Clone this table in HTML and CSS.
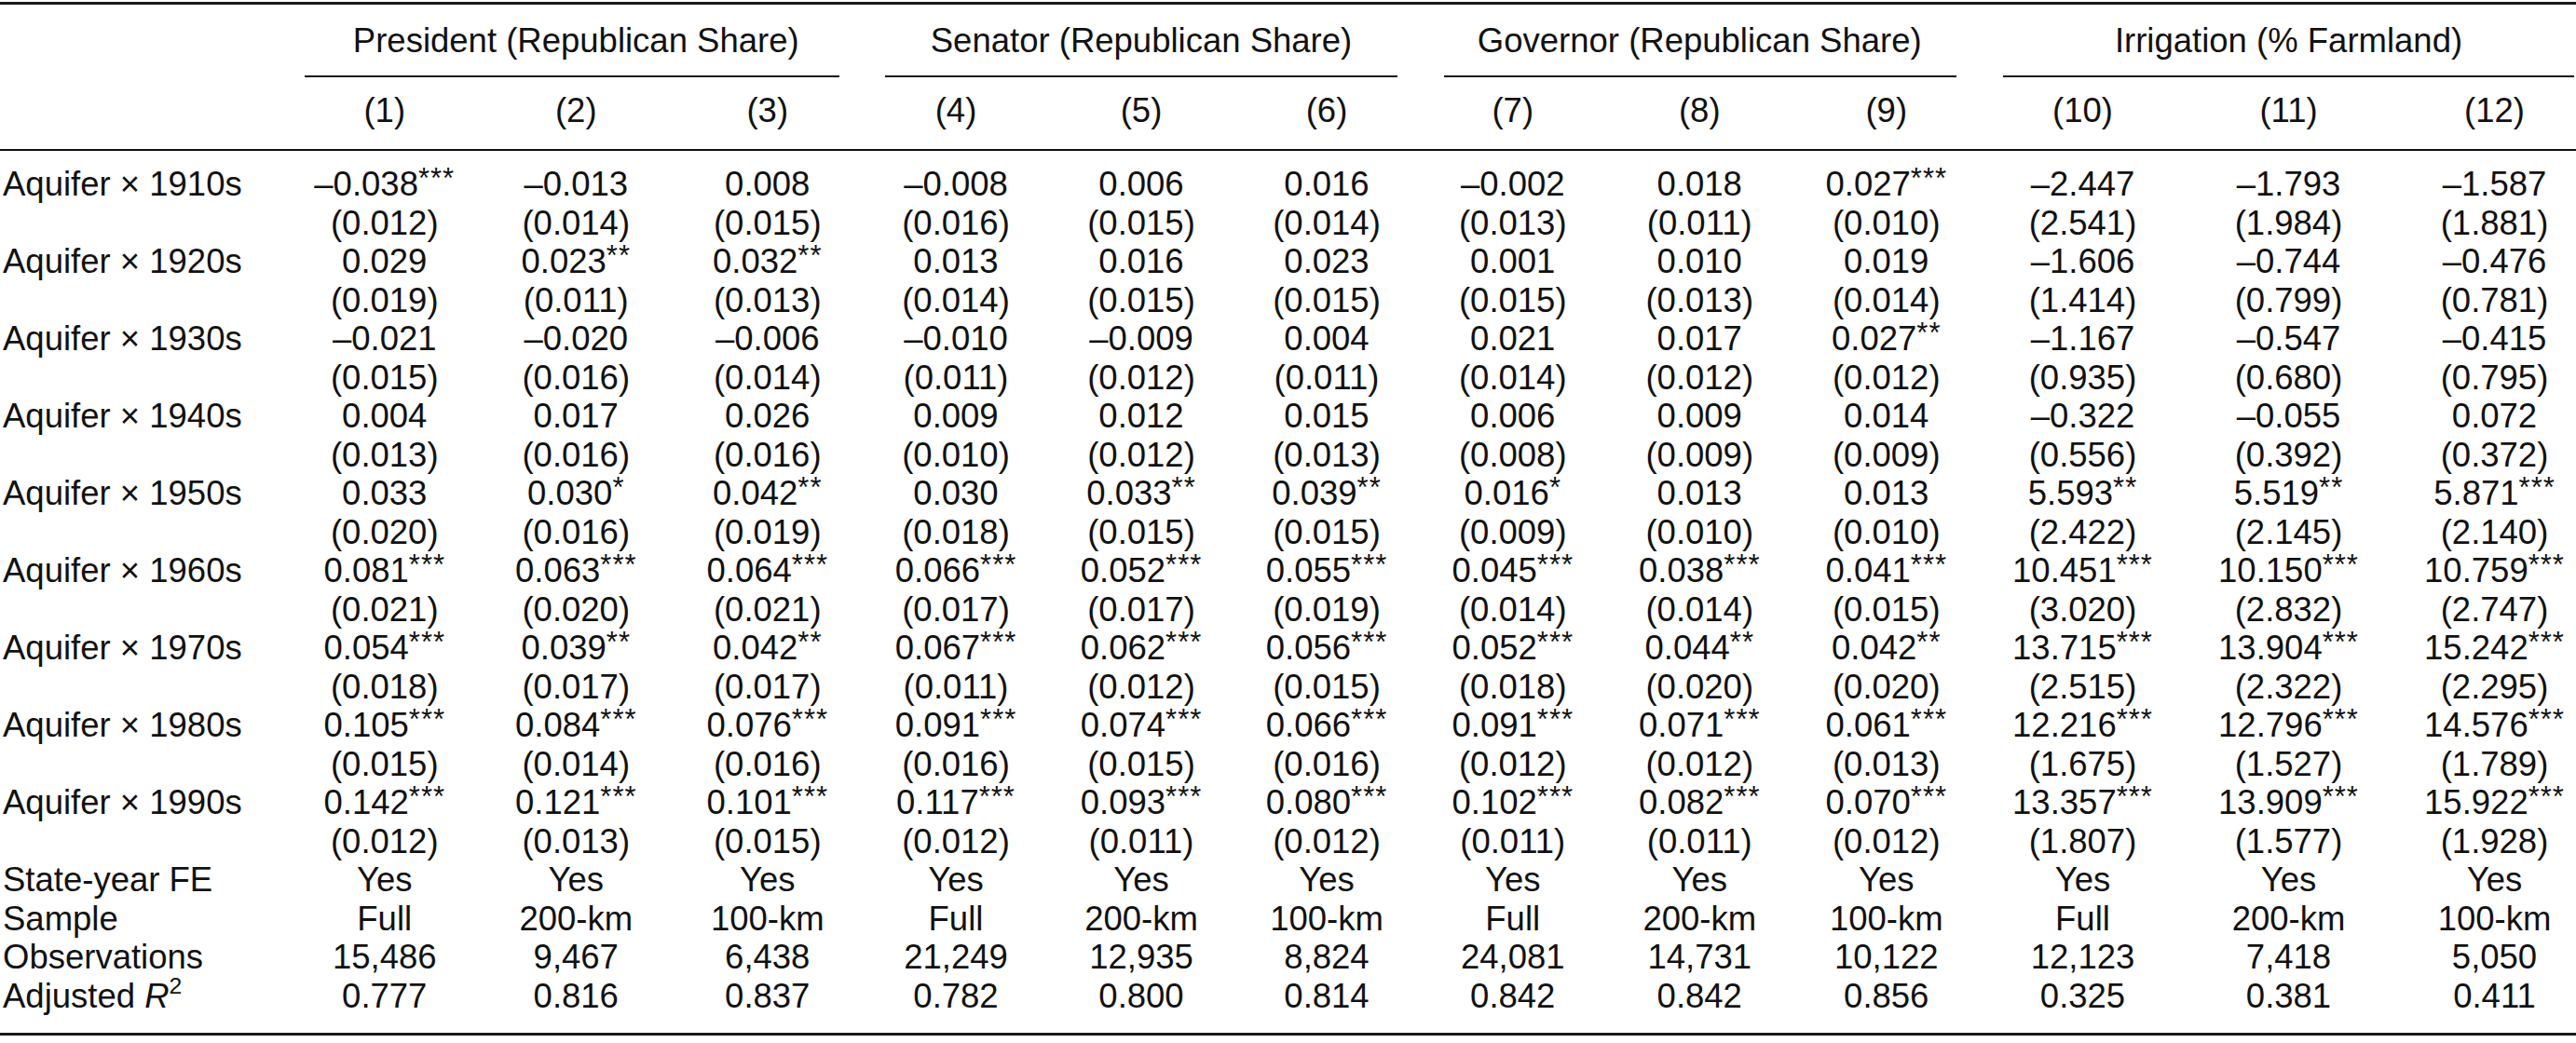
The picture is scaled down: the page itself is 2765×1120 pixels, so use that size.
FILE: index.html
```html
<!DOCTYPE html>
<html lang="en">
<head>
<meta charset="utf-8">
<title>Regression table</title>
<link rel="stylesheet" href="styles.css">
</head>
<body>
<div class="table">
  <div class="toprule"></div>

  <div class="l"></div>
  <div class="grp">President (Republican Share)</div>
  <div class="grp">Senator (Republican Share)</div>
  <div class="grp">Governor (Republican Share)</div>
  <div class="grp">Irrigation (% Farmland)</div>

  <div class="l cmidpad"></div>
  <div class="cmid g1"></div>
  <div class="cmid g2"></div>
  <div class="cmid g3"></div>
  <div class="cmid g4"></div>

  <div class="l"></div>
  <div class="c">(1)</div><div class="c">(2)</div><div class="c">(3)</div>
  <div class="c">(4)</div><div class="c">(5)</div><div class="c">(6)</div>
  <div class="c">(7)</div><div class="c">(8)</div><div class="c">(9)</div>
  <div class="c">(10)</div><div class="c">(11)</div><div class="c">(12)</div>

  <div class="midrule"></div>

  <div class="l">Aquifer × 1910s</div>
  <div class="c">–0.038<span class="s">***</span></div><div class="c">–0.013</div><div class="c">0.008</div>
  <div class="c">–0.008</div><div class="c">0.006</div><div class="c">0.016</div>
  <div class="c">–0.002</div><div class="c">0.018</div><div class="c">0.027<span class="s">***</span></div>
  <div class="c">–2.447</div><div class="c">–1.793</div><div class="c">–1.587</div>
  <div class="l"></div>
  <div class="c">(0.012)</div><div class="c">(0.014)</div><div class="c">(0.015)</div>
  <div class="c">(0.016)</div><div class="c">(0.015)</div><div class="c">(0.014)</div>
  <div class="c">(0.013)</div><div class="c">(0.011)</div><div class="c">(0.010)</div>
  <div class="c">(2.541)</div><div class="c">(1.984)</div><div class="c">(1.881)</div>

  <div class="l">Aquifer × 1920s</div>
  <div class="c">0.029</div><div class="c">0.023<span class="s">**</span></div><div class="c">0.032<span class="s">**</span></div>
  <div class="c">0.013</div><div class="c">0.016</div><div class="c">0.023</div>
  <div class="c">0.001</div><div class="c">0.010</div><div class="c">0.019</div>
  <div class="c">–1.606</div><div class="c">–0.744</div><div class="c">–0.476</div>
  <div class="l"></div>
  <div class="c">(0.019)</div><div class="c">(0.011)</div><div class="c">(0.013)</div>
  <div class="c">(0.014)</div><div class="c">(0.015)</div><div class="c">(0.015)</div>
  <div class="c">(0.015)</div><div class="c">(0.013)</div><div class="c">(0.014)</div>
  <div class="c">(1.414)</div><div class="c">(0.799)</div><div class="c">(0.781)</div>

  <div class="l">Aquifer × 1930s</div>
  <div class="c">–0.021</div><div class="c">–0.020</div><div class="c">–0.006</div>
  <div class="c">–0.010</div><div class="c">–0.009</div><div class="c">0.004</div>
  <div class="c">0.021</div><div class="c">0.017</div><div class="c">0.027<span class="s">**</span></div>
  <div class="c">–1.167</div><div class="c">–0.547</div><div class="c">–0.415</div>
  <div class="l"></div>
  <div class="c">(0.015)</div><div class="c">(0.016)</div><div class="c">(0.014)</div>
  <div class="c">(0.011)</div><div class="c">(0.012)</div><div class="c">(0.011)</div>
  <div class="c">(0.014)</div><div class="c">(0.012)</div><div class="c">(0.012)</div>
  <div class="c">(0.935)</div><div class="c">(0.680)</div><div class="c">(0.795)</div>

  <div class="l">Aquifer × 1940s</div>
  <div class="c">0.004</div><div class="c">0.017</div><div class="c">0.026</div>
  <div class="c">0.009</div><div class="c">0.012</div><div class="c">0.015</div>
  <div class="c">0.006</div><div class="c">0.009</div><div class="c">0.014</div>
  <div class="c">–0.322</div><div class="c">–0.055</div><div class="c">0.072</div>
  <div class="l"></div>
  <div class="c">(0.013)</div><div class="c">(0.016)</div><div class="c">(0.016)</div>
  <div class="c">(0.010)</div><div class="c">(0.012)</div><div class="c">(0.013)</div>
  <div class="c">(0.008)</div><div class="c">(0.009)</div><div class="c">(0.009)</div>
  <div class="c">(0.556)</div><div class="c">(0.392)</div><div class="c">(0.372)</div>

  <div class="l">Aquifer × 1950s</div>
  <div class="c">0.033</div><div class="c">0.030<span class="s">*</span></div><div class="c">0.042<span class="s">**</span></div>
  <div class="c">0.030</div><div class="c">0.033<span class="s">**</span></div><div class="c">0.039<span class="s">**</span></div>
  <div class="c">0.016<span class="s">*</span></div><div class="c">0.013</div><div class="c">0.013</div>
  <div class="c">5.593<span class="s">**</span></div><div class="c">5.519<span class="s">**</span></div><div class="c">5.871<span class="s">***</span></div>
  <div class="l"></div>
  <div class="c">(0.020)</div><div class="c">(0.016)</div><div class="c">(0.019)</div>
  <div class="c">(0.018)</div><div class="c">(0.015)</div><div class="c">(0.015)</div>
  <div class="c">(0.009)</div><div class="c">(0.010)</div><div class="c">(0.010)</div>
  <div class="c">(2.422)</div><div class="c">(2.145)</div><div class="c">(2.140)</div>

  <div class="l">Aquifer × 1960s</div>
  <div class="c">0.081<span class="s">***</span></div><div class="c">0.063<span class="s">***</span></div><div class="c">0.064<span class="s">***</span></div>
  <div class="c">0.066<span class="s">***</span></div><div class="c">0.052<span class="s">***</span></div><div class="c">0.055<span class="s">***</span></div>
  <div class="c">0.045<span class="s">***</span></div><div class="c">0.038<span class="s">***</span></div><div class="c">0.041<span class="s">***</span></div>
  <div class="c">10.451<span class="s">***</span></div><div class="c">10.150<span class="s">***</span></div><div class="c">10.759<span class="s">***</span></div>
  <div class="l"></div>
  <div class="c">(0.021)</div><div class="c">(0.020)</div><div class="c">(0.021)</div>
  <div class="c">(0.017)</div><div class="c">(0.017)</div><div class="c">(0.019)</div>
  <div class="c">(0.014)</div><div class="c">(0.014)</div><div class="c">(0.015)</div>
  <div class="c">(3.020)</div><div class="c">(2.832)</div><div class="c">(2.747)</div>

  <div class="l">Aquifer × 1970s</div>
  <div class="c">0.054<span class="s">***</span></div><div class="c">0.039<span class="s">**</span></div><div class="c">0.042<span class="s">**</span></div>
  <div class="c">0.067<span class="s">***</span></div><div class="c">0.062<span class="s">***</span></div><div class="c">0.056<span class="s">***</span></div>
  <div class="c">0.052<span class="s">***</span></div><div class="c">0.044<span class="s">**</span></div><div class="c">0.042<span class="s">**</span></div>
  <div class="c">13.715<span class="s">***</span></div><div class="c">13.904<span class="s">***</span></div><div class="c">15.242<span class="s">***</span></div>
  <div class="l"></div>
  <div class="c">(0.018)</div><div class="c">(0.017)</div><div class="c">(0.017)</div>
  <div class="c">(0.011)</div><div class="c">(0.012)</div><div class="c">(0.015)</div>
  <div class="c">(0.018)</div><div class="c">(0.020)</div><div class="c">(0.020)</div>
  <div class="c">(2.515)</div><div class="c">(2.322)</div><div class="c">(2.295)</div>

  <div class="l">Aquifer × 1980s</div>
  <div class="c">0.105<span class="s">***</span></div><div class="c">0.084<span class="s">***</span></div><div class="c">0.076<span class="s">***</span></div>
  <div class="c">0.091<span class="s">***</span></div><div class="c">0.074<span class="s">***</span></div><div class="c">0.066<span class="s">***</span></div>
  <div class="c">0.091<span class="s">***</span></div><div class="c">0.071<span class="s">***</span></div><div class="c">0.061<span class="s">***</span></div>
  <div class="c">12.216<span class="s">***</span></div><div class="c">12.796<span class="s">***</span></div><div class="c">14.576<span class="s">***</span></div>
  <div class="l"></div>
  <div class="c">(0.015)</div><div class="c">(0.014)</div><div class="c">(0.016)</div>
  <div class="c">(0.016)</div><div class="c">(0.015)</div><div class="c">(0.016)</div>
  <div class="c">(0.012)</div><div class="c">(0.012)</div><div class="c">(0.013)</div>
  <div class="c">(1.675)</div><div class="c">(1.527)</div><div class="c">(1.789)</div>

  <div class="l">Aquifer × 1990s</div>
  <div class="c">0.142<span class="s">***</span></div><div class="c">0.121<span class="s">***</span></div><div class="c">0.101<span class="s">***</span></div>
  <div class="c">0.117<span class="s">***</span></div><div class="c">0.093<span class="s">***</span></div><div class="c">0.080<span class="s">***</span></div>
  <div class="c">0.102<span class="s">***</span></div><div class="c">0.082<span class="s">***</span></div><div class="c">0.070<span class="s">***</span></div>
  <div class="c">13.357<span class="s">***</span></div><div class="c">13.909<span class="s">***</span></div><div class="c">15.922<span class="s">***</span></div>
  <div class="l"></div>
  <div class="c">(0.012)</div><div class="c">(0.013)</div><div class="c">(0.015)</div>
  <div class="c">(0.012)</div><div class="c">(0.011)</div><div class="c">(0.012)</div>
  <div class="c">(0.011)</div><div class="c">(0.011)</div><div class="c">(0.012)</div>
  <div class="c">(1.807)</div><div class="c">(1.577)</div><div class="c">(1.928)</div>

  <div class="l">State-year FE</div>
  <div class="c">Yes</div><div class="c">Yes</div><div class="c">Yes</div>
  <div class="c">Yes</div><div class="c">Yes</div><div class="c">Yes</div>
  <div class="c">Yes</div><div class="c">Yes</div><div class="c">Yes</div>
  <div class="c">Yes</div><div class="c">Yes</div><div class="c">Yes</div>

  <div class="l">Sample</div>
  <div class="c">Full</div><div class="c">200-km</div><div class="c">100-km</div>
  <div class="c">Full</div><div class="c">200-km</div><div class="c">100-km</div>
  <div class="c">Full</div><div class="c">200-km</div><div class="c">100-km</div>
  <div class="c">Full</div><div class="c">200-km</div><div class="c">100-km</div>

  <div class="l">Observations</div>
  <div class="c">15,486</div><div class="c">9,467</div><div class="c">6,438</div>
  <div class="c">21,249</div><div class="c">12,935</div><div class="c">8,824</div>
  <div class="c">24,081</div><div class="c">14,731</div><div class="c">10,122</div>
  <div class="c">12,123</div><div class="c">7,418</div><div class="c">5,050</div>

  <div class="l">Adjusted <i>R</i><span class="sq">2</span></div>
  <div class="c">0.777</div><div class="c">0.816</div><div class="c">0.837</div>
  <div class="c">0.782</div><div class="c">0.800</div><div class="c">0.814</div>
  <div class="c">0.842</div><div class="c">0.842</div><div class="c">0.856</div>
  <div class="c">0.325</div><div class="c">0.381</div><div class="c">0.411</div>

  <div class="bottomrule"></div>
</div>
</body>
</html>
```
FILE: styles.css
```css
html, body {
  margin: 0;
  padding: 0;
  background: #ffffff;
}

body {
  width: 2765px;
  height: 1120px;
  overflow: hidden;
}

.table {
  display: grid;
  grid-template-columns: 310px repeat(3, 205.5px) repeat(3, 199px) repeat(3, 200.5px) repeat(3, 221px);
  width: 2788px;
  padding-top: 2px;
  font-family: "Liberation Sans", Arial, Helvetica, sans-serif;
  font-size: 36.5px;
  line-height: 41.5px;
  color: #111111;
}

.toprule {
  grid-column: 1 / -1;
  height: 3px;
  background: #1a1a1a;
  margin-bottom: 18px;
}

.midrule {
  grid-column: 1 / -1;
  height: 2px;
  background: #111111;
  margin-top: 20.5px;
  margin-bottom: 15px;
}

.bottomrule {
  grid-column: 1 / -1;
  height: 3px;
  background: #1a1a1a;
  margin-top: 19px;
}

.grp {
  grid-column: span 3;
  text-align: center;
  white-space: nowrap;
}

.cmidpad {
  height: 2px;
}

.cmid {
  grid-column: span 3;
  height: 2px;
  background: #111111;
  margin-top: 16.5px;
  margin-bottom: 15px;
}

.cmid.g1 { margin-left: 17px; margin-right: 25.5px; }
.cmid.g2 { margin-left: 23.5px; margin-right: 23.5px; }
.cmid.g3 { margin-left: 26.5px; margin-right: 25px; }
.cmid.g4 { margin-left: 25px; margin-right: 25px; }

.l {
  padding-left: 3px;
  white-space: nowrap;
}

.c {
  text-align: center;
  white-space: nowrap;
}

.s {
  font-size: 0.85em;
  line-height: 0;
  letter-spacing: 1px;
  vertical-align: 0.25em;
}

.sq {
  font-size: 0.68em;
  line-height: 0;
  vertical-align: 0.62em;
}
```
